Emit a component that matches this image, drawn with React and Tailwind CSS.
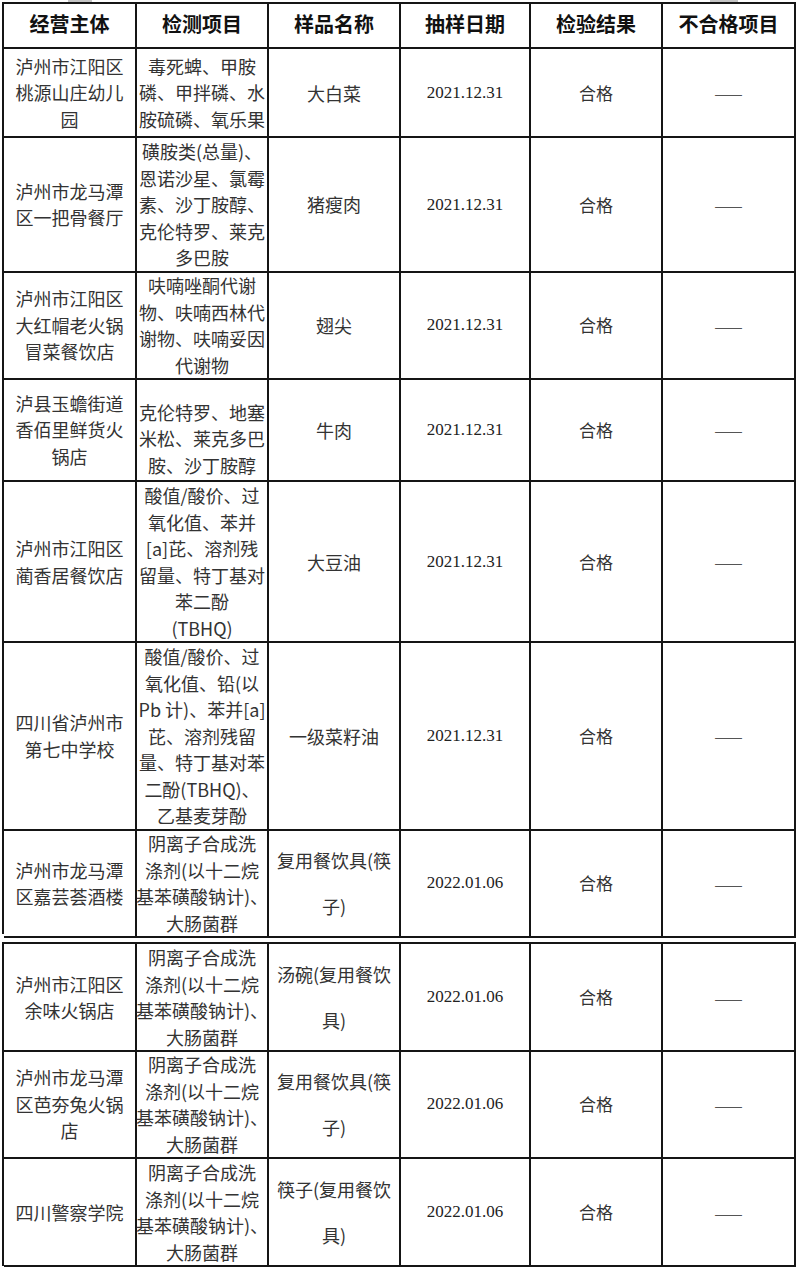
import React from "react";

const headers = ["经营主体", "检测项目", "样品名称", "抽样日期", "检验结果", "不合格项目"];

const detergent = ["阴离子合成洗", "涤剂(以十二烷", "基苯磺酸钠计)、", "大肠菌群"];

const table1 = [
  {
    h: "h-[89px]",
    c1: ["泸州市江阳区", "桃源山庄幼儿", "园"],
    c2: ["毒死蜱、甲胺", "磷、甲拌磷、水", "胺硫磷、氧乐果"],
    c3: ["大白菜"],
    d: "2021.12.31",
  },
  {
    h: "h-[134px]",
    c1: ["泸州市龙马潭", "区一把骨餐厅"],
    c2: ["磺胺类(总量)、", "恩诺沙星、氯霉", "素、沙丁胺醇、", "克伦特罗、莱克", "多巴胺"],
    c3: ["猪瘦肉"],
    d: "2021.12.31",
  },
  {
    h: "h-[107px]",
    c1: ["泸州市江阳区", "大红帽老火锅", "冒菜餐饮店"],
    c2: ["呋喃唑酮代谢", "物、呋喃西林代", "谢物、呋喃妥因", "代谢物"],
    c3: ["翅尖"],
    d: "2021.12.31",
  },
  {
    h: "h-[103px]",
    c1: ["泸县玉蟾街道", "香佰里鲜货火", "锅店"],
    c2: ["克伦特罗、地塞", "米松、莱克多巴", "胺、沙丁胺醇"],
    c2pad: "pt-[18px]",
    c3: ["牛肉"],
    d: "2021.12.31",
  },
  {
    h: "h-[161px]",
    c1: ["泸州市江阳区", "蔺香居餐饮店"],
    c2: ["酸值/酸价、过", "氧化值、苯并", "[a]芘、溶剂残", "留量、特丁基对", "苯二酚", "(TBHQ)"],
    c3: ["大豆油"],
    d: "2021.12.31",
  },
  {
    h: "h-[187px]",
    c1: ["四川省泸州市", "第七中学校"],
    c2: ["酸值/酸价、过", "氧化值、铅(以", "Pb 计)、苯并[a]", "芘、溶剂残留", "量、特丁基对苯", "二酚(TBHQ)、", "乙基麦芽酚"],
    c3: ["一级菜籽油"],
    d: "2021.12.31",
  },
  {
    h: "h-[104px]",
    c1: ["泸州市龙马潭", "区嘉芸荟酒楼"],
    c2: detergent,
    c3: ["复用餐饮具(筷", "子)"],
    d: "2022.01.06",
  },
];

const table2 = [
  {
    h: "h-[107px]",
    c1: ["泸州市江阳区", "余味火锅店"],
    c2: detergent,
    c3: ["汤碗(复用餐饮", "具)"],
    d: "2022.01.06",
  },
  {
    h: "h-[108px]",
    c1: ["泸州市龙马潭", "区芭夯兔火锅", "店"],
    c2: detergent,
    c3: ["复用餐饮具(筷", "子)"],
    d: "2022.01.06",
  },
  {
    h: "h-[107px]",
    c1: ["四川警察学院"],
    c2: detergent,
    c3: ["筷子(复用餐饮", "具)"],
    d: "2022.01.06",
  },
];

const cell =
  "border-r-2 border-b-2 border-[#151515] flex flex-col items-center justify-center text-center overflow-visible";

function Lines({ lines, leading }) {
  return (
    <div className={`flex flex-col items-center ${leading}`}>
      {lines.map((l, i) => (
        <div key={i} className="whitespace-nowrap">
          {l}
        </div>
      ))}
    </div>
  );
}

function Row({ r }) {
  const twoLine = r.c3.length > 1;
  return (
    <div className={`grid grid-cols-[133px_132px_132px_130px_132px_133px] ${r.h}`}>
      <div className={cell}>
        <Lines lines={r.c1} leading="leading-[26.5px]" />
      </div>
      <div className={`${cell} ${r.c2pad || ""}`}>
        <Lines lines={r.c2} leading="leading-[26.5px]" />
      </div>
      <div className={cell}>
        <Lines lines={r.c3} leading={twoLine ? "leading-[46px]" : "leading-[26px]"} />
      </div>
      <div className={cell}>
        <span className="font-['Liberation_Serif',serif] text-[17px] text-[#222]">{r.d}</span>
      </div>
      <div className={cell}>
        <span className="text-[17px]">合格</span>
      </div>
      <div className={cell}>
        <span className="text-[17px] text-[#555] leading-none">——</span>
      </div>
    </div>
  );
}

function Table({ rows, header, className }) {
  return (
    <div className={`w-[794px] border-l-2 border-t-2 border-[#151515] ${className || ""}`}>
      {header && (
        <div className="grid grid-cols-[133px_132px_132px_130px_132px_133px] h-[45px]">
          {headers.map((h) => (
            <div key={h} className={`${cell} font-bold text-[20px] text-[#111] pb-[4px]`}>
              {h}
            </div>
          ))}
        </div>
      )}
      {rows.map((r, i) => (
        <Row key={i} r={r} />
      ))}
    </div>
  );
}

export default function App() {
  return (
    <div className="relative w-[800px] h-[1271px] bg-white font-['Noto_Sans_CJK_SC',sans-serif] text-[18px] text-[#333] pt-[2px] pl-[2px] flex flex-col gap-[8px]">
      <div className="absolute top-0 left-[68px] w-[24px] h-[2px] bg-[#c4c4c4]" />
      <div className="absolute top-0 left-[710px] w-[28px] h-[2px] bg-[#c4c4c4]" />
      <Table rows={table1} header />
      <Table rows={table2} />
    </div>
  );
}
